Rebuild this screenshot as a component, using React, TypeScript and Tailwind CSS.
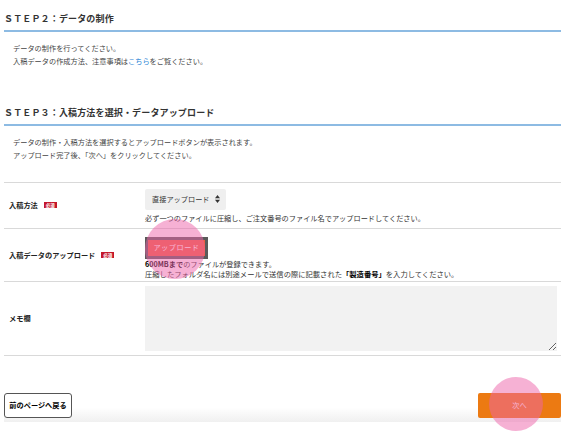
import React from 'react';

const FONT = { fontFamily: '"Noto Sans CJK JP", "Noto Sans", sans-serif' };

function Badge() {
  return (
    <span className="ml-[6px] inline-flex h-[6px] items-center bg-[#c4162a] px-[2px] text-[4.5px] font-bold leading-none text-white">
      必須
    </span>
  );
}

function StepHeading({ children }: { children: React.ReactNode }) {
  return (
    <h2 className="border-b-2 border-[#8dbbe3] pb-[5px] text-[9px] font-bold leading-[12px] tracking-[0.15px] text-[#333]">
      {children}
    </h2>
  );
}

function Row({
  label,
  children,
  className = '',
}: {
  label: React.ReactNode;
  children: React.ReactNode;
  className?: string;
}) {
  return (
    <div className={`flex items-center border-b border-[#d9d9d9] ${className}`}>
      <div className="flex w-[141px] shrink-0 items-center pl-[5px] text-[7.2px] font-bold text-[#222]">
        {label}
      </div>
      <div className="flex-1 pr-[4px]">{children}</div>
    </div>
  );
}

export default function App() {
  return (
    <div className="relative h-[431px] w-[569px] overflow-hidden bg-white" style={FONT}>
      <div className="px-[4px] pr-[8px] pt-[13px]">
        <StepHeading>ＳＴＥＰ２：データの制作</StepHeading>
        <div className="mt-[10px] pl-[9px] text-[7.2px] leading-[13px] text-[#444]">
          <p>データの制作を行ってください。</p>
          <p>
            入稿データの作成方法、注意事項は<span className="text-[#2a86d6]">こちら</span>をご覧ください。
          </p>
        </div>

        <div className="mt-[39px]">
          <StepHeading>ＳＴＥＰ３：入稿方法を選択・データアップロード</StepHeading>
        </div>
        <div className="mt-[10px] pl-[9px] text-[7.2px] leading-[13px] text-[#444]">
          <p>データの制作・入稿方法を選択するとアップロードボタンが表示されます。</p>
          <p>アップロード完了後、「次へ」をクリックしてください。</p>
        </div>

        <div className="mt-[20px] border-t border-[#d9d9d9]">
          <Row label={<>入稿方法<Badge /></>} className="h-[46px]">
            <div className="flex h-[21px] w-[81px] items-center gap-[4px] rounded-[2px] bg-[#efefef] pl-[7px] text-[7.2px] text-[#333]">
              <span>直接アップロード</span>
              <svg width="5" height="8" viewBox="0 0 5 8" className="ml-[1px]">
                <path d="M2.5 0 L5 3.3 L0 3.3 Z" fill="#333" />
                <path d="M2.5 8 L5 4.7 L0 4.7 Z" fill="#333" />
              </svg>
            </div>
            <p className="mt-[3px] text-[7.2px] leading-[10px] text-[#333]">
              必ず一つのファイルに圧縮し、ご注文番号のファイル名でアップロードしてください。
            </p>
          </Row>

          <Row label={<>入稿データのアップロード<Badge /></>} className="h-[53px]">
            <div className="inline-flex h-[22px] w-[63px] items-center justify-center border-[3px] border-[#5a5a5a] bg-[#ef5d3c] text-[7.2px] tracking-[0.5px] text-white">
              アップロード
            </div>
            <p className="mt-[1px] text-[7.2px] leading-[9px] text-[#333]">
              <span className="font-bold text-black">600MBまで</span>のファイルが登録できます。
            </p>
            <p className="text-[7.3px] leading-[10px] text-[#333]">
              圧縮したフォルダ名には別途メールで送信の際に記載された
              <span className="font-bold text-black">「製造番号」</span>を入力してください。
            </p>
          </Row>

          <Row label="メモ欄" className="h-[74px]">
            <textarea className="block h-[65px] w-full resize-y rounded-none bg-[#f2f2f2] outline-none" />
          </Row>
        </div>

        <div className="mt-[37px] flex items-start justify-between bg-linear-to-b from-white from-50% to-[#f0f0f0] pb-[4px]">
          <button className="h-[25px] w-[68px] rounded-[3px] border border-[#555] bg-white text-[7.2px] font-bold text-black">
            前のページへ戻る
          </button>
          <button className="h-[25px] w-[83px] rounded-[2px] bg-[#ec7a12] text-[7.2px] text-white">
            次へ
          </button>
        </div>
      </div>

      <div className="pointer-events-none absolute left-[145px] top-[219px] h-[60px] w-[60px] rounded-full bg-[rgba(238,100,170,0.5)]" />
      <div className="pointer-events-none absolute left-[489px] top-[377px] h-[54px] w-[54px] rounded-full bg-[rgba(238,100,170,0.5)]" />
    </div>
  );
}
